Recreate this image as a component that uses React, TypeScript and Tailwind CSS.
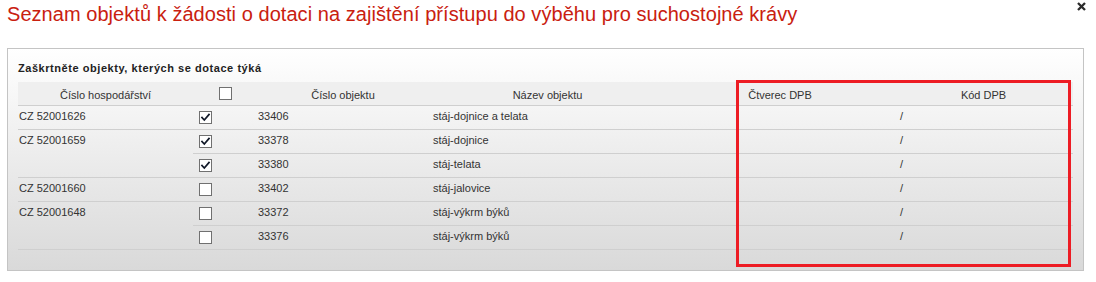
import React from "react";

type Row = {
  farm?: string;
  span?: number;
  skip?: boolean;
  checked: boolean;
  num: string;
  name: string;
};

const rows: Row[] = [
  { farm: "CZ 52001626", span: 1, checked: true, num: "33406", name: "stáj-dojnice a telata" },
  { farm: "CZ 52001659", span: 2, checked: true, num: "33378", name: "stáj-dojnice" },
  { skip: true, checked: true, num: "33380", name: "stáj-telata" },
  { farm: "CZ 52001660", span: 1, checked: false, num: "33402", name: "stáj-jalovice" },
  { farm: "CZ 52001648", span: 2, checked: false, num: "33372", name: "stáj-výkrm býků" },
  { skip: true, checked: false, num: "33376", name: "stáj-výkrm býků" },
];

function Box({ checked }: { checked: boolean }) {
  return (
    <div className="w-[13px] h-[13px] border border-[#707070] bg-white relative">
      {checked && (
        <svg width="11" height="11" viewBox="0 0 11 11" className="absolute left-0 top-0">
          <polyline points="2,5.5 4.3,8 9,2.5" fill="none" stroke="#101828" strokeWidth="1.7" strokeLinecap="square" />
        </svg>
      )}
    </div>
  );
}

const td = "border-b border-[#cfcfcf] align-top h-[24px] p-0";
const th = "border-b border-[#cfcfcf] align-top h-[23px] p-0";

export default function App() {
  return (
    <div className="relative w-[1096px] h-[282px] bg-white text-[#333]" style={{ fontFamily: '"Liberation Sans", Arial, sans-serif' }}>
      <div className="flex items-start justify-between h-[28px]">
        <div className="pl-[7px] text-[20px] leading-[28px] text-[#c9200f] whitespace-nowrap tracking-[0.05px]">
          Seznam objektů k žádosti o dotaci na zajištění přístupu do výběhu pro suchostojné krávy
        </div>
        <svg width="9" height="9" viewBox="0 0 9 9" className="mt-[2px] mr-[10px]">
          <path d="M1 1 L8 8 M8 1 L1 8" stroke="#2b2b2b" strokeWidth="2.3" />
        </svg>
      </div>

      <div className="ml-[7px] mt-[20px] w-[1077px] border border-[#c4c4c4] bg-gradient-to-b from-white to-[#d9d9d9] pt-[13px] pl-[10px] pb-[20px]">
        <div className="text-[11px] leading-[13px] font-bold text-[#222] mb-[7px] tracking-[0.55px]">
          Zaškrtněte objekty, kterých se dotace týká
        </div>
        <table className="table-fixed border-collapse w-[1055px] text-[11px] leading-[13px]">
          <colgroup>
            <col className="w-[175px]" />
            <col className="w-[64px]" />
            <col className="w-[172px]" />
            <col className="w-[237px]" />
            <col className="w-[228px]" />
            <col className="w-[179px]" />
          </colgroup>
          <thead>
            <tr className="bg-[#efefef]">
              <th className={`${th} font-normal text-center pt-[7px]`}>Číslo hospodářství</th>
              <th className={`${th} pt-[5px]`}>
                <div className="flex justify-center">
                  <Box checked={false} />
                </div>
              </th>
              <th className={`${th} font-normal text-center pt-[7px]`}>Číslo objektu</th>
              <th className={`${th} font-normal text-center pt-[7px]`}>Název objektu</th>
              <th className={`${th} font-normal text-center pt-[7px]`}>Čtverec DPB</th>
              <th className={`${th} font-normal text-center pt-[7px]`}>Kód DPB</th>
            </tr>
          </thead>
          <tbody>
            {rows.map((r, i) => (
              <tr key={i}>
                {!r.skip && (
                  <td rowSpan={r.span} className={`${td} pt-[4px] pl-[1px]`}>
                    {r.farm}
                  </td>
                )}
                <td className={`${td} pt-[5px] pl-[6px]`}>
                  <Box checked={r.checked} />
                </td>
                <td className={`${td} pt-[4px] pl-[1px]`}>{r.num}</td>
                <td className={`${td} pt-[4px] pl-[4px]`}>{r.name}</td>
                <td className={`${td}`}></td>
                <td className={`${td} pt-[4px] pl-[6px]`}>/</td>
              </tr>
            ))}
          </tbody>
        </table>
      </div>

      <div className="absolute left-[736px] top-[80px] w-[335px] h-[187px] border-[3px] border-[#ed1c24]" />
    </div>
  );
}
